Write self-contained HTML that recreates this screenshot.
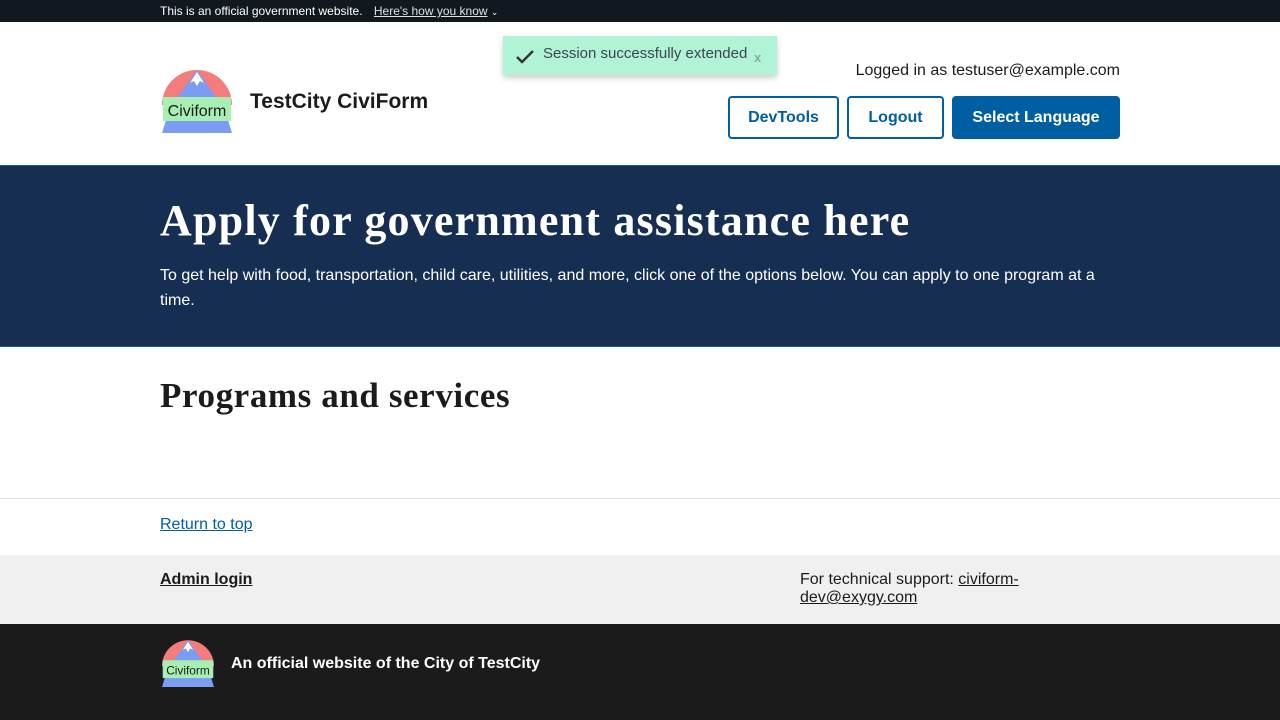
<!DOCTYPE html>
<html><head><meta charset="utf-8"><style>
*{box-sizing:border-box;margin:0;padding:0}
body{width:1280px;height:720px;overflow:hidden;font-family:"Liberation Sans",sans-serif;background:#fff;color:#1b1b1b;position:relative}
.banner{height:22px;background:#111820;color:#fff;font-size:12px;line-height:22px;padding-left:160px}
.banner u{margin-left:8px;color:#dfe1e2}
.hdr{position:relative;height:144px;border-bottom:1px solid #005ea2}
.logo{position:absolute;left:162px;top:48px}
.title{position:absolute;left:250px;top:68px;font-weight:bold;font-size:21px}
.logged{position:absolute;right:160px;top:40px;font-size:16px}
.btn{position:absolute;top:74px;height:43px;border:2px solid #005ea2;border-radius:4px;font-weight:bold;color:#005ea2;font-size:16px;text-align:center;line-height:39px;background:#fff}
.toast{position:absolute;left:503px;top:36px;width:274px;height:39px;background:#b0f3d6;box-shadow:0 3px 6px rgba(0,0,0,.2);font-size:15px;color:#3d4551;line-height:36px;padding-left:40px}
.hero{background:#162e51;color:#fff;height:181px;padding:31px 160px 0;border-bottom:1px solid #005ea2}
.hero h1{font-family:"Liberation Serif",serif;font-size:44px;letter-spacing:1.2px;font-weight:bold;line-height:48px}
.hero p{font-size:16px;line-height:25px;margin-top:18px;width:960px}
h2{font-family:"Liberation Serif",serif;font-size:35px;letter-spacing:0.6px;font-weight:bold;position:absolute;left:160px;top:376px}
.rt{position:absolute;top:498px;left:0;width:1280px;height:57px;border-top:1px solid #dfe1e2;padding:17px 160px;font-size:16px}
a{color:#005ea2}
.ft{position:absolute;top:555px;left:0;width:1280px;height:69px;background:#f0f0f0;font-size:16px}
.ft2{position:absolute;top:624px;left:0;width:1280px;height:96px;background:#1b1b1b;color:#fff}
</style></head><body>
<div class="banner">This is an official government website. <u>Here's how you know</u> <span style="font-size:9px">&#8964;</span></div>
<div class="hdr">
<svg class="logo" width="70" height="64" viewBox="0 0 70 64"><path d="M0 35A35 35 0 0 1 70 35Z" fill="#f47c7c"/><path d="M35 0L10 35H60Z" fill="#7b9cf0"/><path d="M35 2L28 13 32 11 35 16 38 11 42 13Z" fill="#fff"/><path d="M4 50H66L70 63H0Z" fill="#7b9cf0"/><rect x="1" y="27" width="68" height="24" fill="#a8efb4"/><text x="35" y="46" font-family="Liberation Sans" font-size="16" text-anchor="middle" fill="#1b1b1b">Civiform</text></svg>
<div class="title">TestCity CiviForm</div>
<div class="logged">Logged in as testuser@example.com</div>
<div class="btn" style="left:728px;width:111px">DevTools</div>
<div class="btn" style="left:847px;width:97px">Logout</div>
<div class="btn" style="left:952px;width:168px;background:#005ea2;color:#fff">Select Language</div>
</div>
<div class="toast"><svg style="position:absolute;left:13px;top:14px" width="18" height="14"><path d="M1 7L6 12 17 1" stroke="#333" stroke-width="2.4" fill="none"/></svg>Session successfully extended<span style="position:absolute;left:251px;top:4px;color:#8a9;font-weight:bold;font-size:13px">x</span></div>
<div class="hero"><h1>Apply for government assistance here</h1><p>To get help with food, transportation, child care, utilities, and more, click one of the options below. You can apply to one program at a time.</p></div>
<h2>Programs and services</h2>
<div class="rt"><a href="#">Return to top</a></div>
<div class="ft"><a href="#" style="position:absolute;left:160px;top:16px;color:#1b1b1b;font-weight:bold">Admin login</a><div style="position:absolute;left:800px;top:16px;width:260px;line-height:18px">For technical support: <a href="#" style="color:#1b1b1b">civiform-dev@exygy.com</a></div></div>
<div class="ft2"><svg style="position:absolute;left:162px;top:16px" width="52" height="48" viewBox="0 0 70 64"><path d="M0 35A35 35 0 0 1 70 35Z" fill="#f47c7c"/><path d="M35 0L10 35H60Z" fill="#7b9cf0"/><path d="M35 2L28 13 32 11 35 16 38 11 42 13Z" fill="#fff"/><path d="M4 50H66L70 63H0Z" fill="#7b9cf0"/><rect x="1" y="27" width="68" height="24" fill="#a8efb4"/><text x="35" y="46" font-family="Liberation Sans" font-size="16" text-anchor="middle" fill="#1b1b1b">Civiform</text></svg><div style="position:absolute;left:231px;top:31px;font-weight:bold;font-size:16px">An official website of the City of TestCity</div></div>
</body></html>
